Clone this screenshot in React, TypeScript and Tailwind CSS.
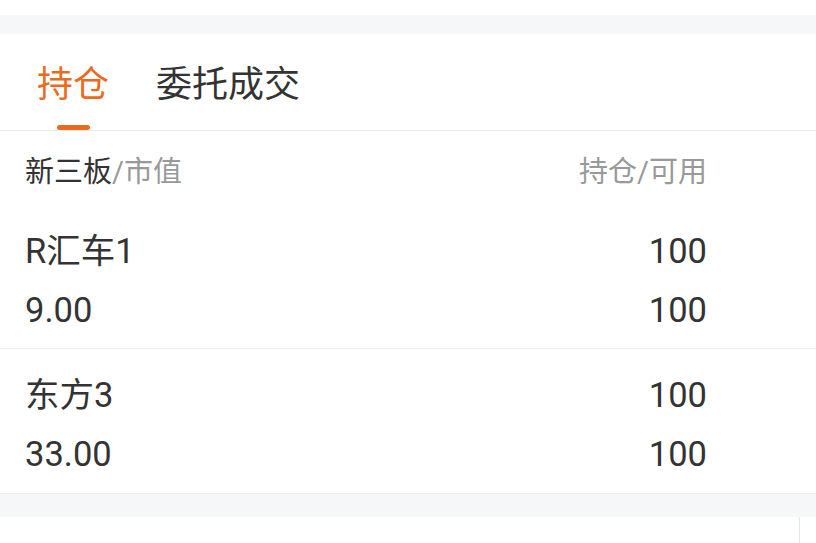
import React from "react";

const rows = [
  { name: "R汇车1", value: "9.00", hold: "100", usable: "100" },
  { name: "东方3", value: "33.00", hold: "100", usable: "100" },
];

const App = () => {
  return (
    <div
      className="w-[816px] h-[543px] overflow-hidden bg-white text-[#333333]"
      style={{ fontFamily: "Roboto, 'Noto Sans CJK SC', sans-serif" }}
    >
      <div className="h-[15px] bg-white" />
      <div className="h-[19px] bg-[#f6f7f9]" />

      {/* tabs */}
      <div className="h-[97px] flex items-start pl-[37px] gap-[47px] border-b border-[#ebebeb]">
        <div className="relative h-full flex flex-col items-center">
          <span className="mt-[29px] text-[36px] leading-[44px] text-[#ec6a1e]">持仓</span>
          <span className="absolute bottom-[0px] w-[33px] h-[5px] rounded-full bg-[#ec6a1e]" />
        </div>
        <span className="mt-[29px] text-[36px] leading-[44px] text-[#333333]">委托成交</span>
      </div>

      {/* header */}
      <div className="h-[74px] flex items-start justify-between pl-[25px] pr-[109px] pt-[24px] text-[29px] leading-[35px]">
        <span>
          新三板<span className="text-[#999999]">/市值</span>
        </span>
        <span className="text-[#999999]">持仓/可用</span>
      </div>

      {/* rows */}
      {rows.map((r, i) => (
        <div
          key={i}
          className={`h-[144px] flex justify-between pl-[25px] pr-[109px] pt-[17px] text-[34.5px] leading-[59px] ${
            i === 0 ? "border-b border-[#eeeeee]" : ""
          }`}
        >
          <div className="flex flex-col">
            <span>{r.name}</span>
            <span>{r.value}</span>
          </div>
          <div className="flex flex-col items-end">
            <span>{r.hold}</span>
            <span>{r.usable}</span>
          </div>
        </div>
      ))}

      <div className="h-[24px] bg-[#f6f7f9] border-t border-[#eeeeee]" />
      <div className="h-[26px] flex justify-end pr-[16px]">
        <div className="w-px h-full bg-[#e6e6e6]" />
      </div>
    </div>
  );
};

export default App;
